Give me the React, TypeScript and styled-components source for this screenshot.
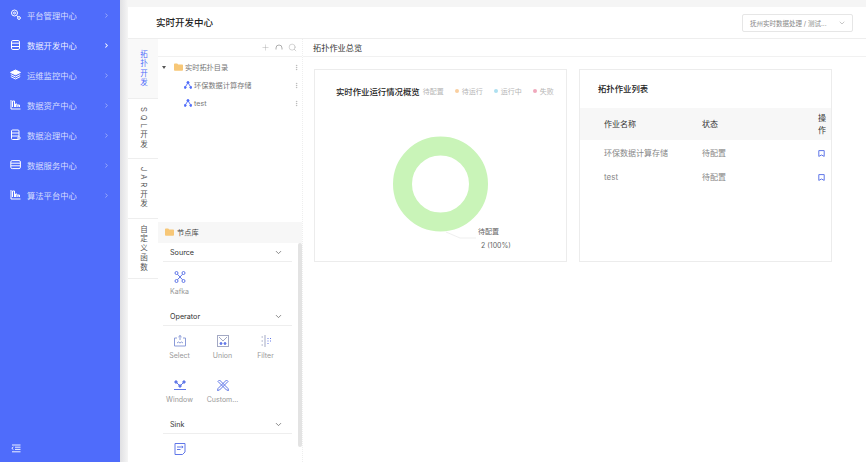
import React from 'react';
import styled, { createGlobalStyle } from 'styled-components';
import { ChevronDown, ChevronRight, Plus, Search, MoreVertical } from 'lucide-react';

const GlobalStyle = createGlobalStyle`
  html, body, #root {
    margin: 0;
    height: 100%;
    overflow: hidden;
  }
  body {
    font-family: Inter, "Noto Sans CJK SC", "Noto Sans", sans-serif;
    color: #333;
    background: #fff;
  }
`;

const Page = styled.div`
  display: flex;
  width: 866px;
  height: 462px;
`;

const Sidebar = styled.nav`
  width: 120px;
  flex-shrink: 0;
  background: #4f6cfb;
  display: flex;
  flex-direction: column;
  position: relative;
  z-index: 1;
`;

const MenuItem = styled.div<{ $active?: boolean }>`
  height: 30px;
  display: flex;
  align-items: center;
  padding: 0 10px;
  gap: 6px;
  font-size: 8.3px;
  color: ${p => (p.$active ? 'rgba(255,255,255,0.92)' : 'rgba(255,255,255,0.78)')};
  svg.chev {
    margin-left: auto;
    opacity: ${p => (p.$active ? 1 : 0.55)};
  }
`;

const MenuIcon = styled.svg`
  width: 11px;
  height: 11px;
  margin-top: -2px;
  fill: none;
  stroke: #fff;
  stroke-width: 1;
  flex-shrink: 0;
`;

const SidebarFoot = styled.div`
  margin-top: auto;
  height: 18px;
  padding-left: 11px;
  display: flex;
  align-items: flex-start;
`;

const Main = styled.main`
  flex: 1;
  min-width: 0;
  display: flex;
  flex-direction: column;
  padding: 7px 0 0 8px;
  background: linear-gradient(90deg, #e0e0e3 0, #f5f5f5 8px);
  position: relative;
`;

const TopStrip = styled.div`
  flex: 1;
  min-height: 0;
  display: flex;
  flex-direction: column;
  background: #fff;
`;

const Header = styled.header`
  height: 31px;
  flex-shrink: 0;
  display: flex;
  align-items: center;
  justify-content: space-between;
  padding: 0 13px 0 28px;
  border-bottom: 1px solid #eee;
`;

const PageTitle = styled.h1`
  margin: 0 0 2px;
  font-size: 9.5px;
  font-weight: 500;
  color: #222;
`;

const Picker = styled.div`
  width: 111px;
  height: 18px;
  box-sizing: border-box;
  border: 1px solid #e6e6e6;
  border-radius: 2px;
  display: flex;
  align-items: center;
  justify-content: space-between;
  padding: 0 6px 0 7px;
  font-size: 6.5px;
  color: #888;
`;

const Body = styled.div`
  flex: 1;
  min-height: 0;
  display: flex;
`;

const Tabs = styled.div`
  width: 30px;
  flex-shrink: 0;
  display: flex;
  flex-direction: column;
`;

const Tab = styled.div<{ $active?: boolean }>`
  height: 60px;
  box-sizing: border-box;
  border-bottom: 1px solid #eee;
  background: ${p => (p.$active ? '#f9f9f9' : '#fff')};
  color: ${p => (p.$active ? '#4f6cfb' : '#555')};
  font-size: 7.5px;
  display: flex;
  align-items: center;
  justify-content: center;
  span {
    writing-mode: vertical-rl;
    letter-spacing: 2px;
  }
  b {
    font-weight: 400;
    letter-spacing: 3px;
  }
`;

const TreePanel = styled.section`
  width: 145px;
  flex-shrink: 0;
  box-sizing: border-box;
  display: flex;
  flex-direction: column;
  border-right: 1px dotted #eee;
`;

const TreeToolbar = styled.div`
  height: 18px;
  flex-shrink: 0;
  box-sizing: border-box;
  border-bottom: 1px solid #f1f1f1;
  display: flex;
  align-items: center;
  justify-content: flex-end;
  gap: 5px;
  padding-right: 5px;
  color: #999;
`;

const Tree = styled.div`
  height: 165px;
  flex-shrink: 0;
  padding-top: 1px;
  box-sizing: border-box;
`;

const TreeRow = styled.div<{ $child?: boolean }>`
  height: 18px;
  display: flex;
  align-items: center;
  padding: 0 2px 0 ${p => (p.$child ? '26px' : '4px')};
  gap: 2px;
  font-size: 7.2px;
  color: #777;
  svg.more {
    margin-left: auto;
    color: #aaa;
  }
`;

const Caret = styled.i`
  width: 0;
  height: 0;
  border-left: 2px solid transparent;
  border-right: 2px solid transparent;
  border-top: 3px solid #555;
  margin-right: 6px;
`;

const LibraryHead = styled.div`
  height: 21px;
  flex-shrink: 0;
  box-sizing: border-box;
  background: #f7f7f7;
  display: flex;
  align-items: center;
  gap: 3px;
  padding: 0 0 2px 7px;
  font-size: 7.2px;
  color: #444;
`;

const LibraryScroll = styled.div`
  flex: 1;
  min-height: 0;
  overflow: hidden;
  position: relative;
  padding: 0 10px 0 5px;
`;

const ScrollThumb = styled.div`
  position: absolute;
  top: 0;
  right: 0;
  width: 4px;
  height: 204px;
  background: #e3e3e3;
  border-radius: 2px;
`;

const GroupHead = styled.div`
  height: 18px;
  display: flex;
  align-items: center;
  justify-content: space-between;
  padding: 0 9px 0 7px;
  font-size: 7.2px;
  color: #333;
  border-bottom: 1px solid #eee;
  svg {
    color: #666;
  }
`;

const NodeGrid = styled.div`
  display: grid;
  grid-template-columns: repeat(3, 43px);
  grid-auto-rows: 39px;
  row-gap: 5px;
  padding-top: 6px;
  margin-left: -5px;
`;

const Node = styled.div`
  display: flex;
  flex-direction: column;
  align-items: center;
  gap: 3px;
  padding-top: 2px;
  font-size: 7px;
  color: #999;
  white-space: nowrap;
`;

const NodeIcon = styled.svg`
  width: 14px;
  height: 14px;
  fill: none;
  stroke: #6077e8;
  stroke-width: 1;
`;

const Overview = styled.section`
  flex: 1;
  min-width: 0;
  display: flex;
  flex-direction: column;
`;

const OverviewHead = styled.div`
  height: 18px;
  flex-shrink: 0;
  box-sizing: border-box;
  border-bottom: 1px solid #f1f1f1;
  display: flex;
  align-items: center;
  padding: 0 0 1px 10px;
  font-size: 8.2px;
  color: #333;
`;

const Cards = styled.div`
  display: flex;
  gap: 12px;
  padding: 12px 34px 0 11px;
`;

const Card = styled.div`
  flex: 1;
  min-width: 0;
  height: 193px;
  box-sizing: border-box;
  border: 1px solid #ececec;
  display: flex;
  flex-direction: column;
`;

const ChartHead = styled.div`
  height: 41px;
  flex-shrink: 0;
  display: flex;
  align-items: center;
  padding-left: 21px;
`;

const CardTitle = styled.h2`
  margin: 0;
  font-size: 8.4px;
  font-weight: 500;
  color: #222;
  white-space: nowrap;
`;

const Legend = styled.div`
  display: flex;
  align-items: center;
  margin-left: 3px;
  gap: 11px;
  font-size: 7px;
  color: #b5b5b5;
`;

const LegendItem = styled.span<{ $dot?: string }>`
  display: inline-flex;
  align-items: center;
  gap: 3px;
  &::before {
    content: '';
    display: ${p => (p.$dot ? 'block' : 'none')};
    width: 4px;
    height: 4px;
    border-radius: 50%;
    background: ${p => p.$dot};
  }
`;

const ListHead = styled.div`
  height: 38px;
  flex-shrink: 0;
  display: flex;
  align-items: center;
  padding: 0 0 2px 18px;
  box-sizing: border-box;
`;

const TableRow = styled.div<{ $head?: boolean }>`
  display: grid;
  grid-template-columns: 98px 116px 13px;
  align-items: center;
  box-sizing: border-box;
  padding: ${p => (p.$head ? '0' : '2px')} 0 0 24px;
  height: ${p => (p.$head ? '32px' : '24px')};
  background: ${p => (p.$head ? '#f7f7f7' : 'transparent')};
  color: ${p => (p.$head ? '#333' : '#888')};
  font-size: 8px;
  line-height: 12px;
`;

const ActionIcon = styled.svg`
  width: 7px;
  height: 7px;
  fill: none;
  stroke: #6077e8;
  stroke-width: 1;
`;

const Folder = () => (
  <svg width="9" height="8" viewBox="0 0 9 8">
    <path d="M0 1.2 C0 .7.3.4.8.4 H3.2 L4.2 1.5 H8.2 C8.6 1.5 9 1.8 9 2.2 V7 C9 7.5 8.6 7.8 8.2 7.8 H.8 C.3 7.8 0 7.5 0 7 Z" fill="#f7c777" />
  </svg>
);

const Topology = () => (
  <svg width="8" height="8" viewBox="0 0 8 8" fill="none" stroke="#4f6cfb" strokeWidth="0.9">
    <circle cx="4" cy="1.6" r="1.1" fill="#4f6cfb" />
    <circle cx="1.2" cy="6.4" r="1" fill="#4f6cfb" />
    <circle cx="6.8" cy="6.4" r="1" fill="#4f6cfb" />
    <path d="M3.4 2.6 1.6 5.6M4.6 2.6 6.4 5.6" />
  </svg>
);

const menuIcons: React.ReactNode[] = [
  <>
    <circle cx="4.5" cy="4" r="3" />
    <circle cx="4.5" cy="4" r="1" />
    <circle cx="9" cy="9" r="1.4" />
    <path d="M6.8 6.5 8 8" />
  </>,
  <>
    <rect x="1.5" y="1.5" width="8" height="9" rx="1.4" />
    <path d="M1.5 4.2h8M1.5 7.5h8" />
  </>,
  <>
    <path d="M5.5 1 10.5 3.4 5.5 5.8.5 3.4Z" fill="#fff" />
    <path d="M.8 5.6 5.5 8l4.7-2.4M.8 7.6l4.7 2.4 4.7-2.4" />
  </>,
  <>
    <path d="M1 1v9h9.5" />
    <path d="M2.5 8V2h2v6M5.5 8V5h1.5v3M8 8V6h1.5v2" />
  </>,
  <>
    <rect x="1.5" y="1" width="7.5" height="9.5" rx="1" />
    <path d="M1.5 4h7.5M1.5 7h7.5" />
    <circle cx="9" cy="9" r="1.2" fill="#4f6cfb" />
  </>,
  <>
    <rect x=".8" y="1.6" width="9.6" height="8" rx="1.4" />
    <path d="M.8 4.2h9.6M.8 6.8h9.6" />
  </>,
  <>
    <path d="M1 1v9h9.5" />
    <path d="M2.5 8V2h2v6M5.5 8V5h1.5v3M8 8V6h1.5v2" />
  </>,
];

const menu = ['平台管理中心', '数据开发中心', '运维监控中心', '数据资产中心', '数据治理中心', '数据服务中心', '算法平台中心'];

const KafkaGlyph = (
  <>
    <circle cx="3.5" cy="3" r="1.5" />
    <circle cx="10.5" cy="3" r="1.5" />
    <circle cx="3.5" cy="11" r="1.5" />
    <circle cx="10.5" cy="11" r="1.5" />
    <path d="M4.4 4.2 9.6 9.8M9.6 4.2 4.4 9.8" />
  </>
);

const operators: { label: string; glyph: React.ReactNode }[] = [
  {
    label: 'Select',
    glyph: (
      <g stroke="#8b9bd8">
        <path d="M4 4H1.5v8h11V4H10" />
        <path d="M7 6V1.5M5.4 3 7 1.5 8.6 3M4 9l1.5-1 1.5 1 1.5-1L10 9" />
      </g>
    ),
  },
  {
    label: 'Union',
    glyph: (
      <g stroke="#a3a9c4">
        <rect x="1.5" y="1.5" width="11" height="11" />
        <path d="M3 3l4 4 4-4" />
        <circle cx="5" cy="9.5" r="1" fill="#6077e8" stroke="#6077e8" />
        <circle cx="9" cy="9.5" r="1" fill="#6077e8" stroke="#6077e8" />
      </g>
    ),
  },
  {
    label: 'Filter',
    glyph: (
      <>
        <path d="M6 1v12M4 3H2.5M4 7H2.5M4 11H2.5" stroke="#a3a9c4" />
        <path d="M8.5 4.5h1M11 4.5h1M8.5 9.5h1M11 7h1M8.5 7h1" />
      </>
    ),
  },
  {
    label: 'Window',
    glyph: (
      <>
        <circle cx="3" cy="4" r="1.2" fill="#6077e8" />
        <circle cx="11" cy="4" r="1.2" fill="#6077e8" />
        <circle cx="7" cy="8" r="1.2" fill="#6077e8" />
        <path d="M1 11.5h12M4 5l2 2M10 5 8 7" />
      </>
    ),
  },
  {
    label: 'Custom...',
    glyph: (
      <>
        <path d="M2 3.5 3.5 2 12 10.5 12.5 12.5 10.5 12Z" />
        <path d="M12 3.5 10.5 2 2 10.5 1.5 12.5 3.5 12Z" />
      </>
    ),
  },
];

const BookIcon = () => (
  <ActionIcon viewBox="0 0 7 7">
    <path d="M.8.6h5.4v5.8L3.5 5 .8 6.4Z" />
  </ActionIcon>
);

const jobs = ['环保数据计算存储', 'test'];

const App: React.FC = () => (
  <Page>
    <GlobalStyle />
    <Sidebar>
      {menu.map((name, i) => (
        <MenuItem key={name} $active={i === 1}>
          <MenuIcon viewBox="0 0 11 11">{menuIcons[i]}</MenuIcon>
          <span>{name}</span>
          <ChevronRight className="chev" size={7} color="#fff" strokeWidth={i === 1 ? 3.5 : 2.5} />
        </MenuItem>
      ))}
      <SidebarFoot>
        <svg width="10" height="9" viewBox="0 0 10 9" fill="none" stroke="#fff" strokeWidth="0.9">
          <path d="M1 1h8.5M4 3.2h5.5M4 5.4h5.5M1 7.8h8.5" />
          <path d="M2.4 3 .8 4.3l1.6 1.3" />
        </svg>
      </SidebarFoot>
    </Sidebar>
    <Main>
      <TopStrip>
        <Header>
          <PageTitle>实时开发中心</PageTitle>
          <Picker>
            <span>抚州实时数据处理 / 测试...</span>
            <ChevronDown size={8} color="#aaa" />
          </Picker>
        </Header>
        <Body>
          <Tabs>
            <Tab $active><span>拓扑开发</span></Tab>
            <Tab><span><b>SQL</b>开发</span></Tab>
            <Tab><span><b>JAR</b>开发</span></Tab>
            <Tab><span>自定义函数</span></Tab>
          </Tabs>
          <TreePanel>
            <TreeToolbar>
              <Plus size={9} strokeWidth={1} />
              <svg width="8" height="8" viewBox="0 0 8 8" fill="none" stroke="#999" strokeWidth="0.8">
                <path d="M1 5.5V4a3 3 0 0 1 6 0v1.5" />
              </svg>
              <Search size={9} strokeWidth={1.1} />
            </TreeToolbar>
            <Tree>
              <TreeRow>
                <Caret />
                <Folder />
                <span>实时拓扑目录</span>
                <MoreVertical className="more" size={7} />
              </TreeRow>
              {jobs.map(job => (
                <TreeRow key={job} $child>
                  <Topology />
                  <span>{job}</span>
                  <MoreVertical className="more" size={7} />
                </TreeRow>
              ))}
            </Tree>
            <LibraryHead>
              <Folder />
              <span>节点库</span>
            </LibraryHead>
            <LibraryScroll>
              <ScrollThumb />
              <GroupHead>Source<ChevronDown size={9} /></GroupHead>
              <NodeGrid>
                <Node>
                  <NodeIcon viewBox="0 0 14 14">{KafkaGlyph}</NodeIcon>
                  Kafka
                </Node>
              </NodeGrid>
              <GroupHead>Operator<ChevronDown size={9} /></GroupHead>
              <NodeGrid>
                {operators.map(op => (
                  <Node key={op.label}>
                    <NodeIcon viewBox="0 0 14 14">{op.glyph}</NodeIcon>
                    {op.label}
                  </Node>
                ))}
              </NodeGrid>
              <GroupHead>Sink<ChevronDown size={9} /></GroupHead>
              <NodeGrid>
                <Node>
                  <NodeIcon viewBox="0 0 14 14">
                    <path d="M2 1.5h10V10l-2.5 2.5H2Z" />
                    <path d="M4 5h5M4 7.5h3.5M9 3.8 10 5 9 6.2" />
                  </NodeIcon>
                </Node>
              </NodeGrid>
            </LibraryScroll>
          </TreePanel>
          <Overview>
            <OverviewHead>拓扑作业总览</OverviewHead>
            <Cards>
              <Card>
                <ChartHead>
                  <CardTitle>实时作业运行情况概览</CardTitle>
                  <Legend>
                    <LegendItem>待配置</LegendItem>
                    <LegendItem $dot="#f9cfa0">待运行</LegendItem>
                    <LegendItem $dot="#aee0f0">运行中</LegendItem>
                    <LegendItem $dot="#f0a8bc">失败</LegendItem>
                  </Legend>
                </ChartHead>
                <svg width="251" height="150" viewBox="0 0 251 150">
                  <circle cx="125.5" cy="73" r="38" fill="none" stroke="#c9f4b8" strokeWidth="19" />
                  <path d="M131 121 L145 127 H161" fill="none" stroke="#e4e4e4" strokeWidth="0.6" />
                  <text x="163" y="123" fontSize="7" fill="#666">待配置</text>
                  <text x="166" y="137" fontSize="7" fill="#666">2 (100%)</text>
                </svg>
              </Card>
              <Card>
                <ListHead>
                  <CardTitle>拓扑作业列表</CardTitle>
                </ListHead>
                <TableRow $head>
                  <span>作业名称</span>
                  <span>状态</span>
                  <span>操作</span>
                </TableRow>
                {jobs.map(job => (
                  <TableRow key={job}>
                    <span>{job}</span>
                    <span>待配置</span>
                    <BookIcon />
                  </TableRow>
                ))}
              </Card>
            </Cards>
          </Overview>
        </Body>
      </TopStrip>
    </Main>
  </Page>
);

export default App;
